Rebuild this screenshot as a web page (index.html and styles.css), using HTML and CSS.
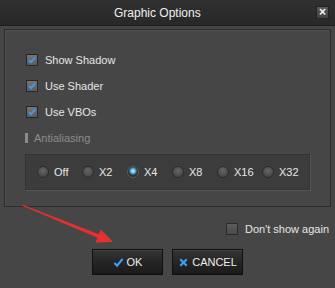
FILE: index.html
```html
<!DOCTYPE html>
<html lang="en">
<head>
  <meta charset="UTF-8">
  <title>Graphic Options</title>
  <link rel="stylesheet" href="styles.css">
</head>
<body>
  <div class="window">
    <div class="titlebar">
      <span class="title">Graphic Options</span>
      <span class="close">&#215;</span>
    </div>

    <div class="content">
      <div class="panel">
        <label class="check"><span class="box"><svg viewBox="0 0 11 11"><path d="M2.2 5.6 L4.4 8 L8.8 2.6" /></svg></span>Show Shadow</label>
        <label class="check"><span class="box"><svg viewBox="0 0 11 11"><path d="M2.2 5.6 L4.4 8 L8.8 2.6" /></svg></span>Use Shader</label>
        <label class="check"><span class="box"><svg viewBox="0 0 11 11"><path d="M2.2 5.6 L4.4 8 L8.8 2.6" /></svg></span>Use VBOs</label>

        <div class="group-label">Antialiasing</div>
        <div class="radios">
          <label class="radio"><span class="dot"></span>Off</label>
          <label class="radio"><span class="dot"></span>X2</label>
          <label class="radio"><span class="dot on"></span>X4</label>
          <label class="radio"><span class="dot"></span>X8</label>
          <label class="radio"><span class="dot"></span>X16</label>
          <label class="radio"><span class="dot"></span>X32</label>
        </div>
      </div>

      <div class="again">
        <label class="check"><span class="box empty"></span>Don't show again</label>
      </div>

      <div class="buttons">
        <button class="btn"><svg class="ico" viewBox="0 0 12 12"><path class="ok" d="M1.5 6.5 L4.5 9.5 L10.5 2" /></svg>OK</button>
        <button class="btn"><svg class="ico" viewBox="0 0 12 12"><path class="x" d="M2.5 2.5 L9.5 9.5 M9.5 2.5 L2.5 9.5" /></svg>CANCEL</button>
      </div>
    </div>

    <svg class="arrow" viewBox="0 0 335 288">
      <polygon points="22.2,204.4 98.9,234.3 100.8,229.5 113,242 95.6,242.5 97.5,237.7 21.8,205.6" />
    </svg>
  </div>
</body>
</html>
```

FILE: styles.css
```css
html, body { margin: 0; padding: 0; }
body { width: 335px; height: 288px; overflow: hidden; background: #454545; font-family: "Liberation Sans", Arial, sans-serif; font-size: 11px; color: #e6e6e6; }

.window { position: relative; height: 288px; background: #464646; }

.titlebar { height: 25px; display: flex; align-items: center; background: linear-gradient(#303030, #282828); border-bottom: 1px solid #1c1c1c; }
.title { margin-left: 114px; font-size: 12px; color: #f0f0f0; flex: 1; }
.close { width: 11px; height: 11px; margin-right: 6px; margin-bottom: 1px; background: linear-gradient(#5a5a5a, #404040); border: 1px solid #232323; color: #f4f4f4; font-size: 12px; line-height: 10px; text-align: center; font-weight: bold; }

.content { padding: 3px 4px 0 4px; }

.panel { height: 159px; border: 1px solid #2c2c2c; box-shadow: inset 1px 1px 0 #515151; padding: 17px 0 0 21px; }

.check { display: flex; align-items: center; height: 26px; }
.box { width: 10px; height: 10px; border: 1px solid #262626; background: linear-gradient(#747474, #5c5c5c); margin-right: 7px; display: inline-block; }
.box svg { display: block; width: 10px; height: 10px; }
.box path { fill: none; stroke: #3f98ec; stroke-width: 2.2; }
.box.empty { background: linear-gradient(#5c5c5c, #4c4c4c); border-color: #2a2a2a; }

.group-label { display: flex; align-items: center; color: #8c8c8c; height: 26px; margin-left: -1px; }
.group-label::before { content: ""; width: 3px; height: 10px; background: #8a8a8a; margin-right: 6px; }

.radios { display: flex; align-items: center; width: 285px; height: 36px; margin: 3px 0 0 -1px; background: #3c3c3c; border: 1px solid #343434; box-shadow: 1px 1px 0 #555; padding-left: 11px; box-sizing: border-box; }
.radio { display: flex; align-items: center; width: 45px; flex: 0 0 45px; }
.dot { width: 12px; height: 12px; border-radius: 50%; box-sizing: border-box; border: 1px solid #2c2c2c; background: radial-gradient(circle at 50% 35%, #666, #3c3c3c); margin-right: 5px; }
.dot.on { background: radial-gradient(circle at 50% 40%, #d5f2ff 0, #66c2ec 2px, #2b6f93 3.5px, #343434 4.2px, #2a2a2a); border-color: #5a5a5a; }

.again { display: flex; justify-content: flex-end; margin-top: 15px; padding-right: 2px; }
.again .check { height: 14px; }

.buttons { display: flex; justify-content: center; gap: 9px; margin-top: 13px; }
.btn { width: 71px; height: 26px; border: 1px solid #0f0f0f; background: linear-gradient(#363636, #262626 45%, #1b1b1b); box-shadow: inset 0 1px 0 #444; color: #eeeeee; font-family: "Liberation Sans", Arial, sans-serif; font-size: 11px; display: flex; align-items: center; justify-content: center; padding: 0; }
.ico { width: 11px; height: 11px; margin-right: 3px; }
.ico path { fill: none; stroke: #3d9ff0; stroke-width: 2.4; }

.arrow { position: absolute; left: 0; top: 0; width: 335px; height: 288px; pointer-events: none; }
.arrow polygon { fill: #e6302e; }
```
